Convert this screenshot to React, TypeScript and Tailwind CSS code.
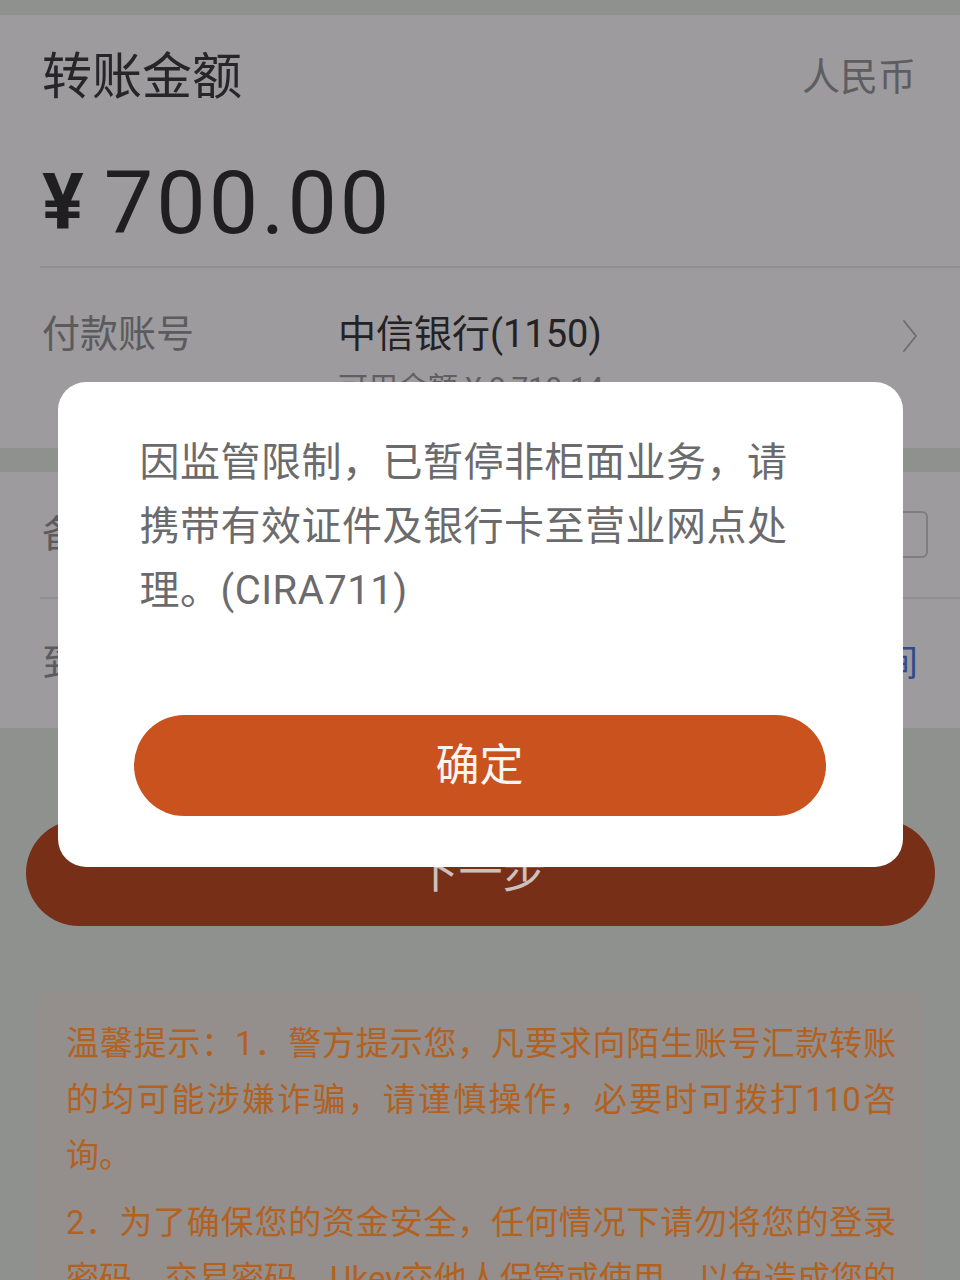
const FONT = "font-['Roboto','Noto_Sans_CJK_SC',sans-serif]";

const Chevron = () => (
    <svg width="16" height="34" viewBox="0 0 16 34" fill="none">
        <polyline
            points="2,2 14,17 2,32"
            stroke="#706f72"
            strokeWidth="2"
            strokeLinecap="round"
            strokeLinejoin="round"
        />
    </svg>
);

const NoticeDialog = () => (
    <div className="absolute inset-0 flex justify-center pt-[382px]">
        <div className="flex h-fit w-[845px] flex-col rounded-[28px] bg-white pb-[51px] pl-[82px] pt-[49px]">
            <p className="w-[660px] text-[40px] leading-[64px] tracking-[0.5px] text-[#6b6b6d]">
                因监管限制，已暂停非柜面业务，请携带有效证件及银行卡至营业网点处理。(CIRA711)
            </p>
            <button className="-ml-[6px] mt-[92px] h-[101px] w-[692px] rounded-full bg-[#c9521f] text-[44px] text-[#f7f4f2]">
                确定
            </button>
        </div>
    </div>
);

export default function App() {
    return (
        <div className={`relative min-h-screen bg-[#8f918e] pt-[15px] ${FONT}`}>
            <section className="flex h-[433px] flex-col bg-[#9d9b9e]">
                <div className="flex h-[124px] items-center justify-between pl-[42px] pr-[44px]">
                    <h1 className="text-[50px] text-[#262528]">转账金额</h1>
                    <span className="text-[38px] text-[#5e5d60]">人民币</span>
                </div>

                <div className="ml-[40px] flex h-[129px] items-center border-b-2 border-[#908f92] pl-[2px] text-[#1f1e21]">
                    <span className="mr-[20px] text-[78px] font-bold leading-none">¥</span>
                    <span className="text-[88px] leading-none tracking-[3px]">700.00</span>
                </div>

                <div className="flex items-start pl-[42px] pr-[42px] pt-[44px]">
                    <span className="w-[296px] text-[38px] leading-[44px] text-[#5b5a5d]">
                        付款账号
                    </span>
                    <div className="flex flex-1 flex-col">
                        <span className="text-[38px] leading-[44px] text-[#232225]">
                            中信银行(1150)
                        </span>
                        <span className="mt-[14px] text-[30px] leading-[36px] text-[#5f5e61]">
                            可用余额 ¥ 8,710.14
                        </span>
                    </div>
                    <div className="pt-[7px]">
                        <Chevron />
                    </div>
                </div>
            </section>

            <section className="mt-[24px] flex flex-col bg-[#9d9b9e]">
                <div className="ml-[40px] flex h-[127px] items-center border-b-2 border-[#908f92] pl-[2px] pr-[32px]">
                    <span className="w-[296px] text-[38px] text-[#5b5a5d]">备注</span>
                    <div className="h-[47px] flex-1 rounded-[6px] border-2 border-[#7f7d80]" />
                </div>
                <div className="flex h-[129px] items-center justify-between pl-[42px] pr-[42px]">
                    <span className="text-[38px] text-[#5b5a5d]">到账时间</span>
                    <span className="text-[36px] text-[#2e4c8c]">选择时间</span>
                </div>
            </section>

            <div className="mt-[92px] pl-[26px] pr-[25px]">
                <button className="flex h-[106px] w-full items-center justify-center rounded-full bg-[#782f18] text-[44px] text-[#cbc2be]">
                    下一步
                </button>
            </div>

            <div className="ml-[38px] mr-[39px] mt-[64px] rounded-[12px] bg-[#948e8d] pb-[40px] pl-[28px] pr-[25px] pt-[26px] text-justify text-[33px] leading-[56px] text-[#b2611f]">
                <p>
                    温馨提示：1．警方提示您，凡要求向陌生账号汇款转账的均可能涉嫌诈骗，请谨慎操作，必要时可拨打110咨询。
                </p>
                <p className="mt-[11px]">
                    2．为了确保您的资金安全，任何情况下请勿将您的登录密码、交易密码、Ukey交他人保管或使用，以免造成您的资金损失。
                </p>
            </div>

            <NoticeDialog />
        </div>
    );
}
